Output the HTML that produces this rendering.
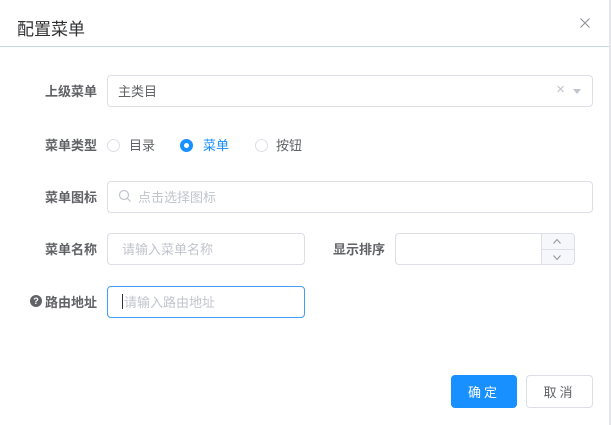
<!DOCTYPE html>
<html><head><meta charset="utf-8"><style>
*{box-sizing:border-box;margin:0;padding:0}
body{width:611px;height:425px;background:#fff;font-family:"Liberation Sans","Noto Sans CJK SC",sans-serif;position:relative;overflow:hidden;color:#606266}
.a{position:absolute}
.title{left:17px;top:15px;font-size:17px;color:#303133}
.hl{left:0;top:46px;width:609px;height:1px;background:#c9d6e8}
.vr{left:609px;top:0;width:2px;height:425px;background:#e4e6ea}
.lbl{font-size:13px;font-weight:bold;color:#606266;text-align:right;width:90px;left:7px}
.inp{border:1px solid #dcdfe6;border-radius:4px;background:#fff;font-size:13px;padding-left:10px;display:flex;align-items:center}
.ph{color:#c0c4cc}
.rad{width:13px;height:13px;border:1px solid #dcdfe6;border-radius:50%}
.btn{border-radius:4px;font-size:13px;display:flex;align-items:center;justify-content:center;letter-spacing:3px}
</style></head><body>
<div class="a title">配置菜单</div>
<svg class="a" style="left:580px;top:18px" width="10" height="10" viewBox="0 0 10 10"><path d="M0.5 0.5l9 9M9.5 0.5l-9 9" stroke="#909399" stroke-width="1.1"/></svg>
<div class="a hl"></div>
<div class="a vr"></div>

<div class="a lbl" style="top:81px">上级菜单</div>
<div class="a inp" style="left:107px;top:75px;width:486px;height:32px;color:#606266;padding-bottom:2px">主类目</div>
<div class="a" style="left:556px;top:83px;font-size:11px;color:#c0c4cc">✕</div>
<div class="a" style="left:573px;top:89px;width:0;height:0;border-left:4px solid transparent;border-right:4px solid transparent;border-top:5px solid #c0c4cc"></div>

<div class="a lbl" style="top:135px">菜单类型</div>
<div class="a rad" style="left:107px;top:139px"></div>
<div class="a" style="left:129px;top:135px;font-size:13px">目录</div>
<div class="a rad" style="left:180px;top:139px;border:4px solid #1890ff;background:#fff"></div>
<div class="a" style="left:203px;top:135px;font-size:13px;color:#1890ff">菜单</div>
<div class="a rad" style="left:255px;top:139px"></div>
<div class="a" style="left:276px;top:135px;font-size:13px">按钮</div>

<div class="a lbl" style="top:187px">菜单图标</div>
<div class="a inp ph" style="left:107px;top:181px;width:486px;height:32px;padding-bottom:2px"><svg width="14" height="14" viewBox="0 0 14 14" style="margin-right:6px"><circle cx="6" cy="6" r="4.5" fill="none" stroke="#c0c4cc" stroke-width="1.2"/><path d="M9.5 9.5l3 3" stroke="#c0c4cc" stroke-width="1.2"/></svg>点击选择图标</div>

<div class="a lbl" style="top:239px">菜单名称</div>
<div class="a inp ph" style="left:107px;top:233px;width:198px;height:32px;padding-left:14px;padding-bottom:2px">请输入菜单名称</div>
<div class="a lbl" style="top:239px;left:295px">显示排序</div>
<div class="a inp" style="left:395px;top:233px;width:180px;height:32px"></div>
<div class="a" style="left:541px;top:234px;width:33px;height:30px;border-left:1px solid #dcdfe6;background:#f5f7fa;border-radius:0 4px 4px 0"></div>
<div class="a" style="left:541px;top:249px;width:33px;height:1px;background:#dcdfe6"></div>
<svg class="a" style="left:553px;top:239px" width="8" height="5" viewBox="0 0 8 5"><path d="M0.5 4.5l3.5-4 3.5 4" fill="none" stroke="#909399" stroke-width="1"/></svg>
<svg class="a" style="left:553px;top:255px" width="8" height="5" viewBox="0 0 8 5"><path d="M0.5 0.5l3.5 4 3.5-4" fill="none" stroke="#909399" stroke-width="1"/></svg>

<div class="a" style="left:30px;top:295px;width:12px;height:12px;border-radius:50%;background:#606266;color:#fff;font-size:9px;font-weight:bold;text-align:center;line-height:12px">?</div>
<div class="a lbl" style="top:292px">路由地址</div>
<div class="a inp ph" style="left:107px;top:286px;width:198px;height:32px;border-color:#409eff;padding-left:14px;padding-bottom:2px"><span style="width:1px;height:15px;background:#303133;margin-right:1px"></span>请输入路由地址</div>

<div class="a btn" style="left:451px;top:375px;width:66px;height:33px;background:#1890ff;color:#fff">确定</div>
<div class="a btn" style="left:526px;top:375px;width:67px;height:33px;border:1px solid #dcdfe6;color:#606266">取消</div>
</body></html>
